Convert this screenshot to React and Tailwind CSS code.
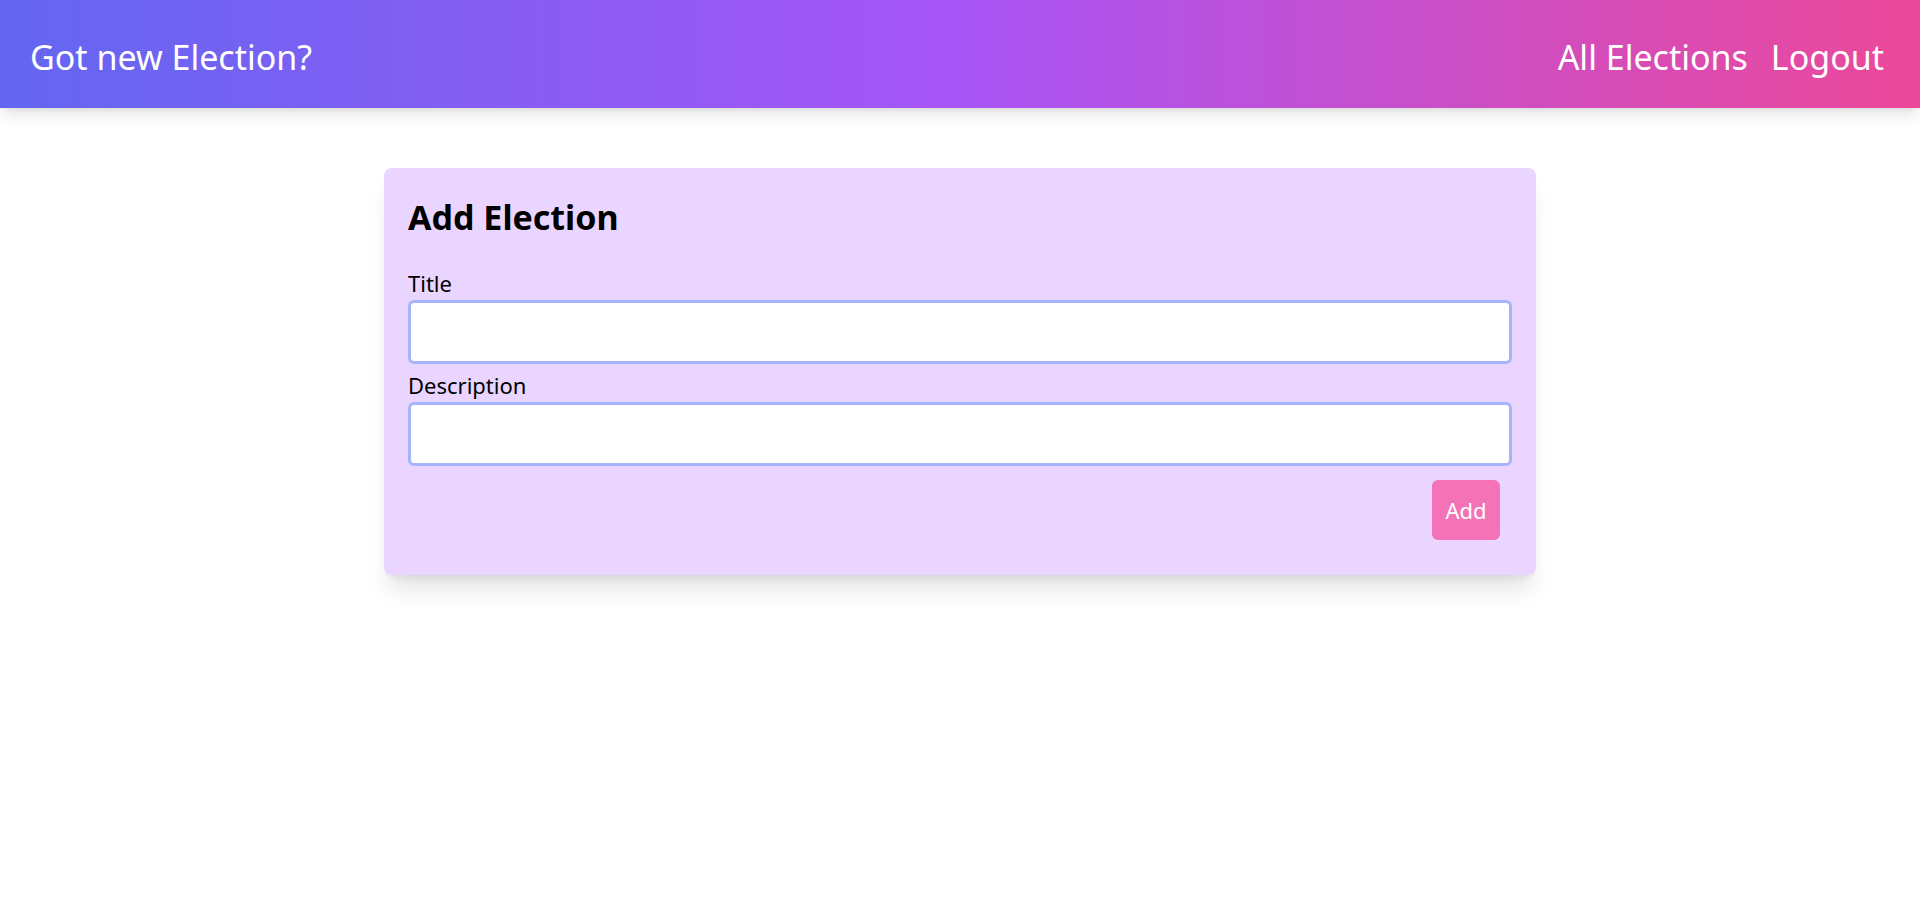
import React from 'react';

function Header() {
    return (
        <header className="relative z-10 h-[108px] flex items-center justify-between pl-[30px] pr-[36px] pt-[6px] bg-[linear-gradient(to_right,#6366f1,#a855f7,#ec4899)] shadow-lg text-white text-[34px]">
            <a href="#" className="leading-[40px]">Got new Election?</a>
            <nav className="flex gap-[23px] leading-[40px]">
                <a href="#">All Elections</a>
                <a href="#">Logout</a>
            </nav>
        </header>
    );
}

function Field({ label, className = '' }) {
    return (
        <div className={className}>
            <label className="block text-[22px] leading-[28px] mb-[3px] text-black">{label}</label>
            <input
                type="text"
                className="block w-full h-[64px] bg-white border-[3px] border-[#a5b4fc] rounded-md px-3 text-[22px] outline-none"
            />
        </div>
    );
}

export default function App() {
    return (
        <div className="min-h-screen bg-white font-['Noto_Sans',sans-serif]">
            <Header />
            <main className="pt-[60px]">
                <div className="mx-auto w-[1152px] bg-[#e9d5ff] rounded-lg shadow-xl p-6 flex flex-col">
                    <h2 className="text-[34px] leading-[50px] font-bold text-black mb-[27px]">Add Election</h2>
                    <Field label="Title" />
                    <Field label="Description" className="mt-[7px]" />
                    <button
                        type="button"
                        className="self-end mt-[14px] mr-3 mb-[11px] w-[68px] h-[60px] rounded-md bg-[#f472b6] text-white text-[22px]"
                    >
                        Add
                    </button>
                </div>
            </main>
        </div>
    );
}
